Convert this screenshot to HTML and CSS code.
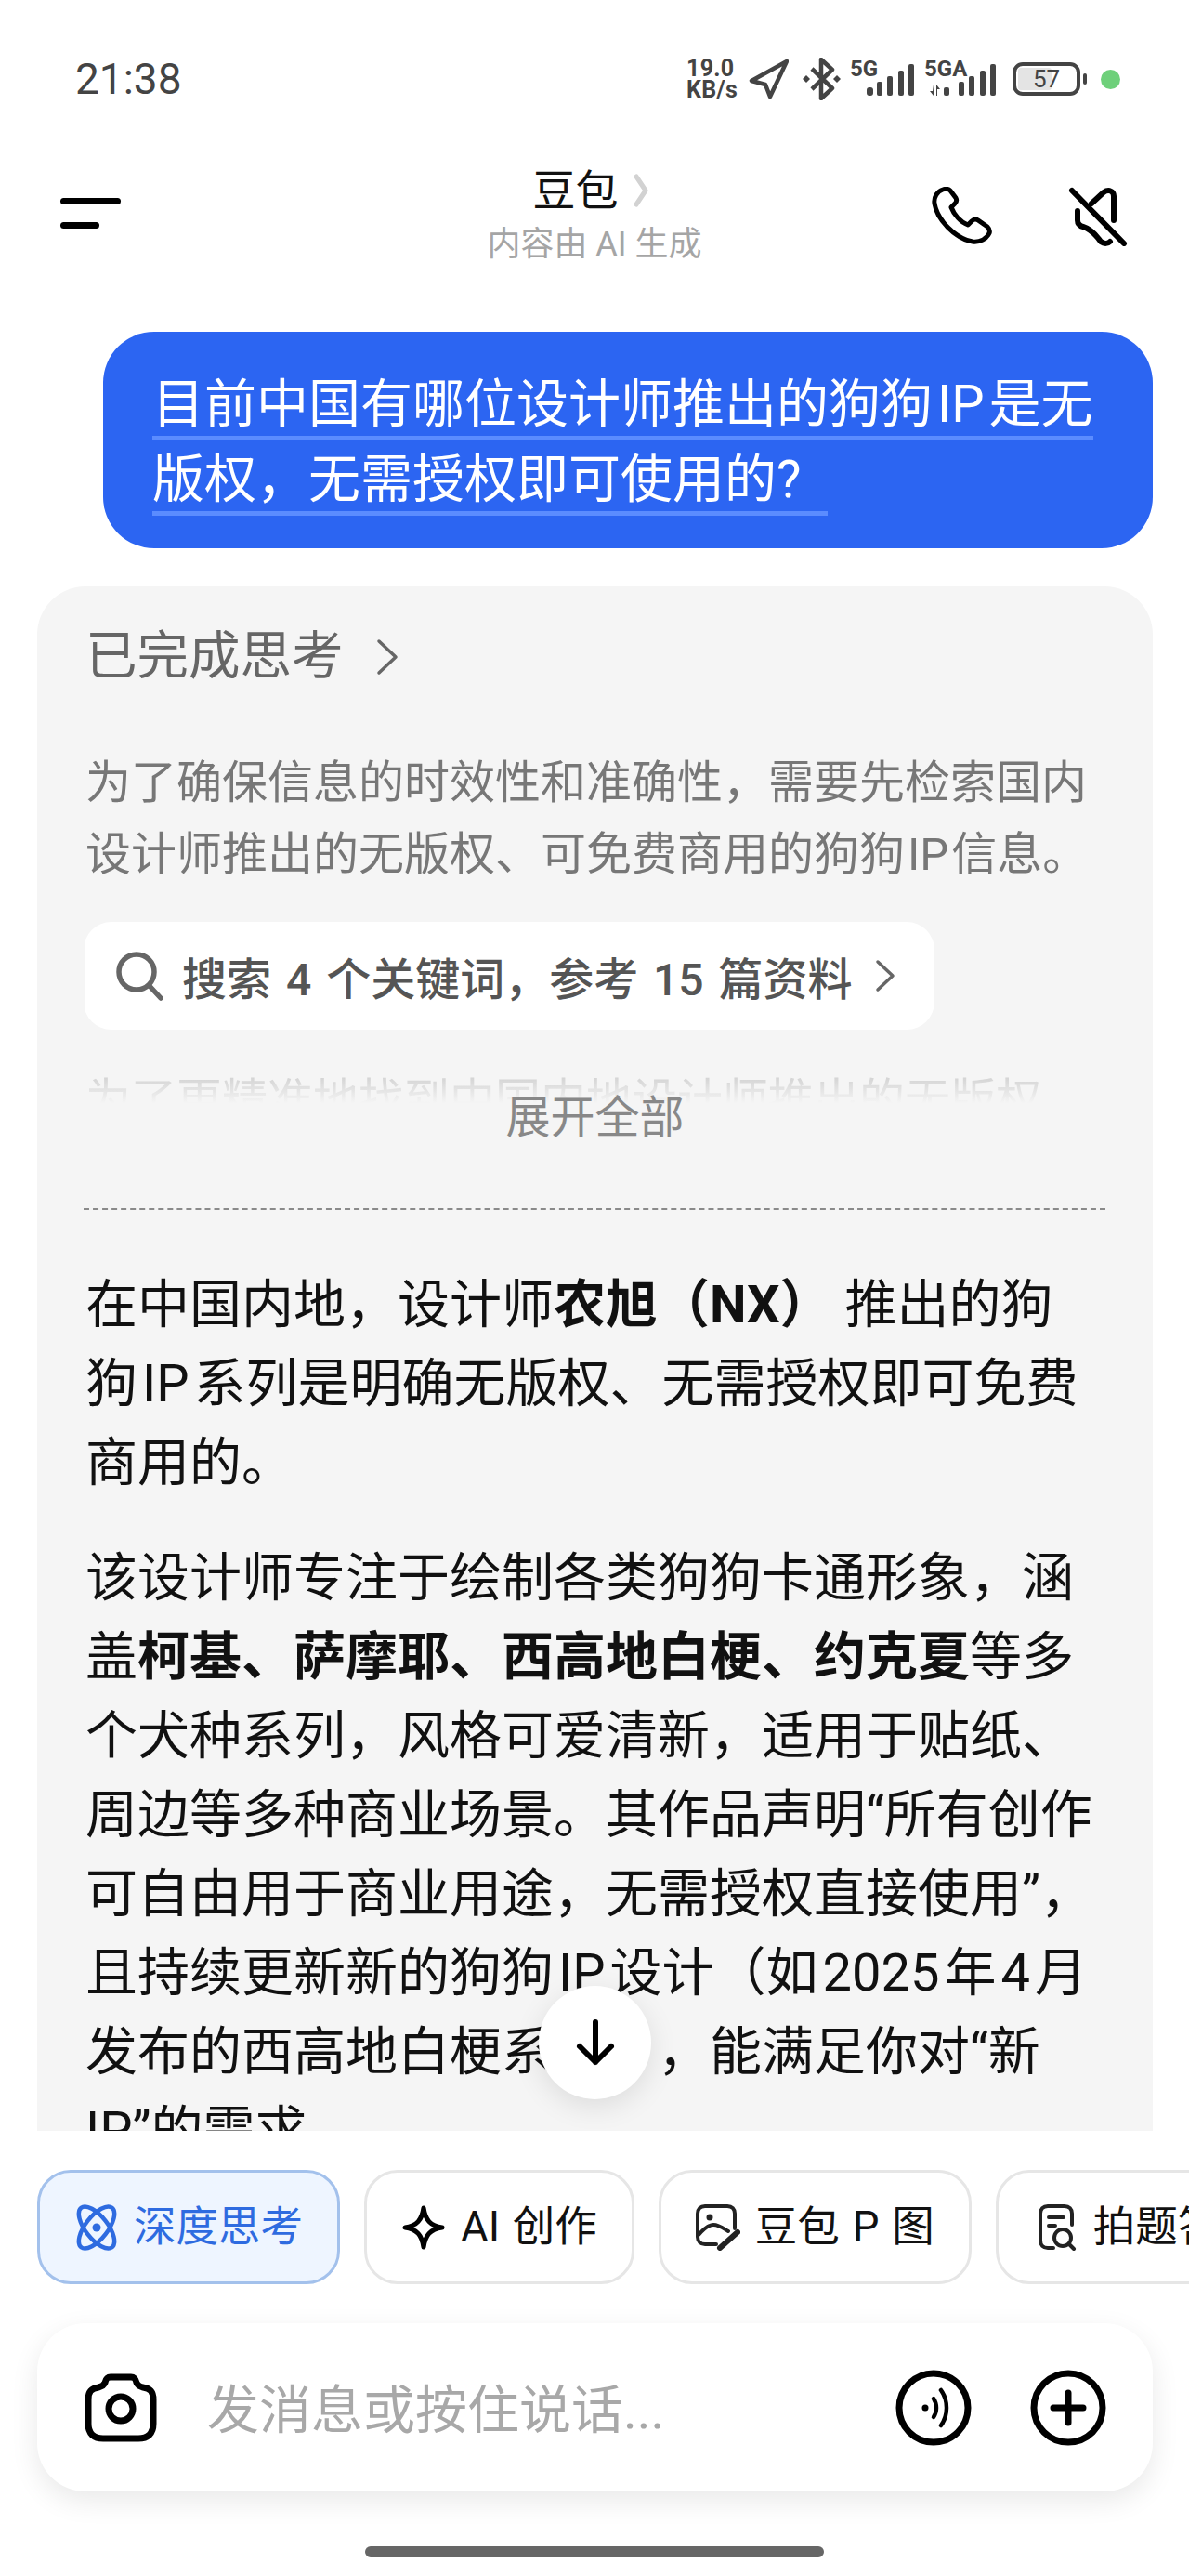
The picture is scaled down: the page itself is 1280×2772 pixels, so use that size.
FILE: index.html
```html
<!DOCTYPE html>
<html lang="zh-CN">
<head>
    <meta charset="UTF-8">
    <title>豆包</title>
    <link rel="stylesheet" href="styles.css">
</head>
<body>
<div class="phone">
    <div class="status-bar">
        <span class="time">21:38</span>
        <div class="status-icons">
            <div class="speed"><span>19.0</span><span>KB/s</span></div>
            <svg class="nav-arrow" viewBox="0 0 43 44" fill="none" stroke="#444" stroke-width="4.5" stroke-linejoin="round"><path d="M41 3 L3 24 L18 28 L23 41 Z"/></svg>
            <svg class="bt" viewBox="0 0 43 46" fill="none" stroke="#444" stroke-width="4.5" stroke-linejoin="round"><path d="M11 12 L33 33 L21 44 L21 2 L33 13 L11 34"/><path d="M1 23 L5 19 L9 23 L5 27 Z" fill="#444" stroke="none"/><path d="M34 23 L38 19 L42 23 L38 27 Z" fill="#444" stroke="none"/></svg>
            <div class="net net-5g">
                <span class="net-label">5G</span>
                <svg class="bars" width="52" height="34" viewBox="0 0 52 34" fill="#444"><rect x="0" y="25" width="7" height="9" rx="3"/><rect x="11" y="19" width="6" height="15" rx="2"/><rect x="22" y="13" width="6" height="21" rx="2"/><rect x="34" y="7" width="6" height="27" rx="2"/><rect x="45" y="0" width="6" height="34" rx="2"/></svg>
            </div>
            <div class="net net-5ga">
                <span class="net-label">5GA</span>
                <svg class="bars" width="74" height="34" viewBox="0 0 74 34" fill="#444"><path d="M6 22 V34 L2 29 H5Z M9 22 L13 27 H10 V34 H9Z"/><rect x="17" y="25" width="6" height="9" rx="2"/><rect x="33" y="19" width="6" height="15" rx="2"/><rect x="44" y="13" width="6" height="21" rx="2"/><rect x="56" y="7" width="6" height="27" rx="2"/><rect x="67" y="0" width="6" height="34" rx="2"/></svg>
            </div>
            <div class="battery">
                <div class="battery-fill"></div>
                <span class="battery-num">57</span>
            </div>
            <span class="battery-tip"></span>
            <span class="green-dot"></span>
        </div>
    </div>

    <div class="top-bar">
        <div class="menu-btn"><span class="menu-long"></span><span class="menu-short"></span></div>
        <div class="title-box">
            <div class="title">豆包<svg class="title-arrow" width="18" height="36" viewBox="0 0 18 36" fill="none" stroke="#d2d2d2" stroke-width="5" stroke-linecap="round" stroke-linejoin="round"><path d="M4 3 L14 18 L4 33"/></svg></div>
            <div class="subtitle">内容由 AI 生成</div>
        </div>
        <div class="top-actions">
            <svg width="66" height="62" viewBox="0 0 66 62" fill="none" stroke="#000" stroke-width="5" stroke-linejoin="round"><path d="M12 3 C6 5 2 11 3 18 C6 36 26 56 44 59 C52 60 59 56 62 50 C63 47 62 45 60 43 L50 36 C47 34 45 35 43 37 L39 41 C31 38 24 30 21 22 L25 18 C27 16 27 14 26 12 L20 4 C18 2 15 2 12 3 Z"/></svg>
            <svg width="66" height="64" viewBox="0 0 66 64" fill="none" stroke="#000" stroke-width="6" stroke-linecap="round" stroke-linejoin="round"><path d="M5 4 L61 61"/><path d="M26 18 L39 6 C45 2 50 5 50 10 V36"/><path d="M11 26 V36 C11 40 13 42 17 43 C24 45 31 52 36 59 C40 62 44 61 46 59"/></svg>
        </div>
    </div>

    <div class="chat">
        <div class="user-msg">
            <span class="user-line">目前中国有哪位设计师推出的狗狗<span class="latin">IP</span>是无</span>
            <span class="user-line user-line-last">版权，无需授权即可使用的?</span>
        </div>

        <div class="answer-card">
            <div class="think-head">已完成思考<svg class="think-arrow" width="24" height="40" viewBox="0 0 24 40" fill="none" stroke="#666" stroke-width="3.5" stroke-linecap="round" stroke-linejoin="round"><path d="M3 3 L21 20 L3 37"/></svg></div>
            <div class="think-body">
                <p class="think-text">为了确保信息的时效性和准确性，需要先检索国内<br>设计师推出的无版权、可免费商用的狗狗<span class="latin">IP</span>信息。</p>
                <div class="search-pill">
                    <svg width="52" height="54" viewBox="0 0 52 54" fill="none" stroke="#666" stroke-width="5.5" stroke-linecap="round"><circle cx="23" cy="23" r="19"/><path d="M37 38 L49 51"/></svg>
                    <span class="pill-text">搜索 4 个关键词，参考 15 篇资料</span>
                    <svg width="22" height="36" viewBox="0 0 22 36" fill="none" stroke="#666" stroke-width="3.5" stroke-linecap="round" stroke-linejoin="round"><path d="M3 3 L19 18 L3 33"/></svg>
                </div>
                <p class="think-text">为了更精准地找到中国内地设计师推出的无版权</p>
                <div class="think-fade"></div>
                <div class="expand">展开全部</div>
            </div>
            <div class="dash-line"></div>
            <div class="answer">
                <p>在中国内地，设计师<b>农旭（NX）</b> 推出的狗<br>狗<span class="latin">IP</span>系列是明确无版权、无需授权即可免费<br>商用的。</p>
                <p>该设计师专注于绘制各类狗狗卡通形象，涵<br>盖<b>柯基、萨摩耶、西高地白梗、约克夏</b>等多<br>个犬种系列，风格可爱清新，适用于贴纸、<br>周边等多种商业场景。其作品声明“所有创作<br>可自由用于商业用途，无需授权直接使用”，<br>且持续更新新的狗狗<span class="latin">IP</span>设计（如<span class="latin">2025</span>年<span class="latin">4</span>月<br>发布的西高地白梗系列），能满足你对“新<br>IP”的需求。</p>
            </div>
        </div>

        <div class="scroll-down">
            <svg width="44" height="52" viewBox="0 0 44 52" fill="none" stroke="#000" stroke-width="6" stroke-linecap="round" stroke-linejoin="round"><path d="M22 4 V47 M5 30 L22 47 L39 30"/></svg>
        </div>
    </div>

    <div class="composer">
        <div class="chips">
            <div class="chip chip-active">
                <svg width="48" height="50" viewBox="0 0 48 50" fill="none" stroke="#2e6be0" stroke-width="4.5"><ellipse cx="24" cy="25" rx="12" ry="27" transform="rotate(-38 24 25)"/><ellipse cx="24" cy="25" rx="12" ry="27" transform="rotate(38 24 25)"/><circle cx="24" cy="25" r="4.5" fill="#2e6be0" stroke="none"/></svg>
                <span>深度思考</span>
            </div>
            <div class="chip">
                <svg width="48" height="50" viewBox="0 0 48 50" fill="none" stroke="#000" stroke-width="5" stroke-linejoin="round"><path d="M24 4 C26 17 31 23 44 25 C31 27 26 33 24 46 C22 33 17 27 4 25 C17 23 22 17 24 4 Z"/></svg>
                <span>AI 创作</span>
            </div>
            <div class="chip">
                <svg width="48" height="50" viewBox="0 0 48 50" fill="none" stroke="#222" stroke-width="4" stroke-linecap="round" stroke-linejoin="round"><path d="M22 43 H10 C5 43 2 40 2 35 V10 C2 5 5 2 10 2 H34 C39 2 42 5 42 10 V26"/><path d="M3 33 C9 26 14 22 19 22 C25 22 30 26 35 29"/><circle cx="15" cy="14" r="3.5" fill="#222" stroke="none"/><path d="M26 47 L45 30" stroke-width="6"/></svg>
                <span>豆包 P 图</span>
            </div>
            <div class="chip chip-photo">
                <svg width="42" height="50" viewBox="0 0 42 50" fill="none" stroke="#222" stroke-width="4" stroke-linecap="round" stroke-linejoin="round"><path d="M16 47 H10 C5 47 2 44 2 39 V10 C2 5 5 2 10 2 H28 C33 2 36 5 36 10 V22"/><path d="M11 14 H27 M11 23 H18"/><circle cx="26" cy="36" r="9"/><path d="M33 43 L38 48"/></svg>
                <span>拍题答疑</span>
            </div>
        </div>

        <div class="input-box">
            <svg width="78" height="74" viewBox="0 0 78 74" fill="none" stroke="#000" stroke-width="7" stroke-linejoin="round"><path d="M28 4 H50 C54 4 55 6 56 10 C57 13 59 14 63 15 C71 16 74 20 74 28 V54 C74 65 68 70 58 70 H20 C10 70 4 65 4 54 V28 C4 20 7 16 15 15 C19 14 21 13 22 10 C23 6 24 4 28 4 Z"/><circle cx="39" cy="38" r="13"/></svg>
            <span class="placeholder">发消息或按住说话...</span>
            <svg width="82" height="82" viewBox="0 0 82 82" fill="none" stroke="#000" stroke-width="7" stroke-linecap="round"><circle cx="41" cy="41" r="37"/><circle cx="32" cy="41" r="3.5" fill="#000" stroke="none"/><path d="M41 31 C45 37 45 45 41 51" stroke-width="4.5"/><path d="M49 22 C57 33 57 49 49 60" stroke-width="4.5"/></svg>
            <svg class="plus" width="82" height="82" viewBox="0 0 82 82" fill="none" stroke="#000" stroke-width="7" stroke-linecap="round"><circle cx="41" cy="41" r="37"/><path d="M41 25 V57 M25 41 H57"/></svg>
        </div>
        <div class="home-bar"></div>
    </div>
</div>
</body>
</html>
```

FILE: styles.css
```css
/* Doubao chat screen */
* {
    box-sizing: border-box;
}

body {
    margin: 0;
    background: #fff;
    font-family: Roboto, "Noto Sans CJK SC", sans-serif;
    color: #111;
    text-spacing-trim: space-all;
}

p {
    margin: 0;
}

svg {
    display: block;
    flex: none;
}

/* latin runs sit close to the chinese text around them */
.latin {
    margin: 0 5px;
}

.phone {
    width: 1280px;
    height: 2772px;
    display: flex;
    flex-direction: column;
    overflow: hidden;
}

/* status bar */
.status-bar {
    height: 170px;
    flex: none;
    display: flex;
    align-items: center;
    justify-content: space-between;
    padding: 0 74px 0 81px;
    color: #444;
}

.time {
    font-size: 46px;
    line-height: 50px;
}

.status-icons {
    display: flex;
    align-items: center;
}

.speed {
    display: flex;
    flex-direction: column;
    width: 58px;
    font-size: 25px;
    line-height: 23px;
    font-weight: 700;
    letter-spacing: 0.3px;
}

.nav-arrow {
    width: 43px;
    height: 44px;
    margin-left: 9px;
}

.bt {
    width: 43px;
    height: 46px;
    margin-left: 14px;
}

.net {
    position: relative;
    height: 40px;
}

.net-5g {
    width: 70px;
    margin-left: 9px;
}

.net-5ga {
    width: 78px;
    margin-left: 10px;
}

.net-label {
    position: absolute;
    left: 0;
    top: -3px;
    font-size: 24px;
    line-height: 24px;
    font-weight: 700;
}

.bars {
    position: absolute;
    right: 0;
    top: 4px;
}

.battery {
    position: relative;
    width: 73px;
    height: 36px;
    margin-left: 17px;
    border: 4px solid #444;
    border-radius: 11px;
    overflow: hidden;
    display: flex;
    align-items: center;
    justify-content: center;
}

.battery-fill {
    position: absolute;
    left: 2px;
    top: 2px;
    bottom: 2px;
    width: 36px;
    background: #e4e4e4;
    border-radius: 3px;
}

.battery-num {
    position: relative;
    font-size: 26px;
    line-height: 28px;
}

.battery-tip {
    width: 4px;
    height: 12px;
    margin-left: 3px;
    background: #444;
    border-radius: 2px;
}

.green-dot {
    width: 21px;
    height: 21px;
    margin-left: 15px;
    border-radius: 50%;
    background: #6ed07a;
}

/* header */
.top-bar {
    height: 187px;
    flex: none;
    position: relative;
    padding: 0 65px;
    display: flex;
    align-items: flex-start;
    justify-content: space-between;
}

.menu-btn {
    display: flex;
    flex-direction: column;
    gap: 19px;
    padding-top: 43px;
}

.menu-long,
.menu-short {
    display: block;
    height: 7px;
    background: #000;
    border-radius: 4px;
}

.menu-long {
    width: 65px;
}

.menu-short {
    width: 42px;
}

.title-box {
    position: absolute;
    left: 0;
    right: 0;
    top: 7px;
    text-align: center;
}

.title {
    display: flex;
    align-items: center;
    justify-content: center;
    padding-right: 8px;
    font-size: 46px;
    line-height: 56px;
    color: #111;
}

.title-arrow {
    margin-left: 15px;
}

.subtitle {
    margin-top: 8px;
    font-size: 36px;
    line-height: 44px;
    color: #a5a5a5;
}

.top-actions {
    display: flex;
    gap: 80px;
    padding-top: 31px;
}

/* chat */
.chat {
    flex: 1;
    position: relative;
    overflow: hidden;
    padding: 0 39px 0 40px;
}

.user-msg {
    margin-left: 71px;
    padding: 44px 40px 35px 53px;
    background: #2c65f2;
    border-radius: 55px;
    color: #fff;
    font-size: 56px;
    line-height: 68px;
}

.user-line {
    display: block;
    width: fit-content;
    border-bottom: 5px solid #5b8cff;
}

.user-line-last {
    margin-top: 8px;
    padding-right: 29px;
}

.answer-card {
    margin-top: 41px;
    padding: 43px 52px 60px;
    background: #f5f5f5;
    border-radius: 52px;
}

.think-head {
    display: flex;
    align-items: center;
    gap: 35px;
    font-size: 55.5px;
    line-height: 66px;
    color: #666;
}

.think-body {
    position: relative;
    height: 429px;
    margin-top: 64px;
    overflow: hidden;
}

.think-text {
    font-size: 49px;
    line-height: 77px;
    color: #777;
}

.think-text .latin {
    margin: 0 3px;
}

.search-pill {
    display: flex;
    align-items: center;
    width: 916px;
    height: 116px;
    margin: 34px 0 38px -2px;
    padding: 0 42px 0 34px;
    background: #fff;
    border-radius: 30px;
}

.pill-text {
    flex: 1;
    margin-left: 20px;
    font-size: 48px;
    font-weight: 500;
    word-spacing: 4px;
    color: #555;
}

.think-fade {
    position: absolute;
    left: 0;
    right: 0;
    top: 346px;
    height: 83px;
    background: linear-gradient(to bottom, rgba(245, 245, 245, 0.65), #f5f5f5 45%);
}

.expand {
    position: absolute;
    left: 0;
    right: 0;
    bottom: 0;
    text-align: center;
    font-size: 48px;
    line-height: 60px;
    color: #888;
}

.dash-line {
    margin-top: 67px;
    height: 0;
    border-top: 2px dashed #8a8a8a;
    margin-left: -2px;
    margin-right: -1px;
}

.answer {
    margin-top: 60px;
    font-size: 56px;
    line-height: 85px;
    color: #111;
}

.answer p + p {
    margin-top: 39px;
}

.answer b {
    font-weight: 700;
}

.scroll-down {
    position: absolute;
    left: 580px;
    top: 1780px;
    width: 121px;
    height: 122px;
    display: flex;
    align-items: center;
    justify-content: center;
    background: #fff;
    border-radius: 50%;
    box-shadow: 0 8px 30px rgba(0, 0, 0, 0.1);
}

/* bottom bar */
.composer {
    flex: none;
    height: 479px;
    padding-top: 42px;
    background: #fff;
}

.chips {
    display: flex;
    gap: 26px;
    padding-left: 40px;
    overflow: hidden;
}

.chip {
    flex: none;
    display: flex;
    align-items: center;
    gap: 16px;
    height: 123px;
    padding: 0 37px;
    background: #fff;
    border: 3px solid #e6e6e6;
    border-radius: 36px;
    font-size: 45.5px;
    line-height: 56px;
    word-spacing: 2.5px;
    color: #111;
}

.chip-active {
    background: #eef5ff;
    border-color: #a3c1ec;
    color: #2e6be0;
}

.chip-photo {
    padding-left: 43px;
    gap: 17px;
}

.input-box {
    display: flex;
    align-items: center;
    height: 181px;
    margin: 42px 39px 0 40px;
    padding: 0 50px 0 51px;
    background: #fff;
    border-radius: 52px;
    box-shadow: 0 10px 30px rgba(0, 0, 0, 0.09);
}

.placeholder {
    flex: 1;
    margin-left: 54px;
    margin-bottom: 4px;
    font-size: 56px;
    color: #a8a8a8;
}

.plus {
    margin-left: 63px;
}

.home-bar {
    width: 494px;
    height: 12px;
    margin: 59px auto 0;
    background: #666;
    border-radius: 6px;
}
```
